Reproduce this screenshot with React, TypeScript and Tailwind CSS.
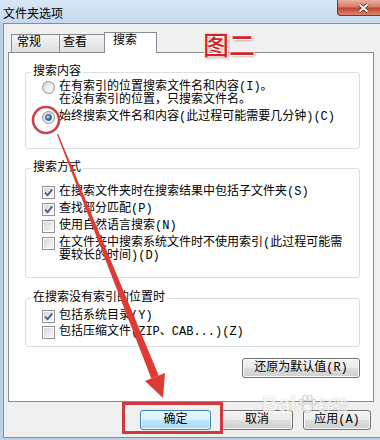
import type { ReactNode } from 'react';

function Radio({ on }: { on?: boolean }) {
  return (
    <span className="flex h-[13px] w-[13px] shrink-0 items-center justify-center rounded-full border border-[#8f9297] bg-gradient-to-br from-[#cfd3d8] to-[#fbfbfb]">
      {on ? (
        <span className="h-[7px] w-[7px] rounded-full border border-[#1d4f87] bg-[radial-gradient(circle_at_35%_35%,#bfe2fb,#2b74c0_60%,#18467c)]" />
      ) : (
        <span className="h-[7px] w-[7px] rounded-full bg-gradient-to-br from-[#e2e4e7] to-[#ffffff]" />
      )}
    </span>
  );
}

function Check({ on }: { on?: boolean }) {
  return (
    <span className="flex h-[13px] w-[13px] shrink-0 items-center justify-center border border-[#8f9297] bg-white">
      <span className="flex h-[9px] w-[9px] items-center justify-center bg-gradient-to-br from-[#d3d7dc] to-[#f8f8f8]">
        {on && (
          <svg width="9" height="9" viewBox="0 0 9 9" className="overflow-visible">
            <path d="M1 4.6 3.6 7.2 8.2 1.4" fill="none" stroke="#46577c" strokeWidth="1.7" />
          </svg>
        )}
      </span>
    </span>
  );
}

function Row({ children, box }: { children: ReactNode; box: ReactNode }) {
  return (
    <div className="flex items-start gap-[4px] pl-[16px] leading-[13px] whitespace-nowrap">
      {box}
      <span>{children}</span>
    </div>
  );
}

function Group({ title, className, children }: { title: string; className: string; children: ReactNode }) {
  return (
    <fieldset className={`rounded-[3px] border border-[#d5dfe5] ${className}`}>
      <legend className="ml-[5px] px-[2px] leading-[14px]">{title}</legend>
      {children}
    </fieldset>
  );
}

function Btn({ children, className }: { children: ReactNode; className: string }) {
  return (
    <button
      className={`flex h-[20px] items-center justify-center rounded-[3px] border leading-[12px] ${className}`}
    >
      {children}
    </button>
  );
}

const plain =
  'border-[#707070] bg-[linear-gradient(#f3f3f3_0%,#ebebeb_48%,#dddddd_52%,#cfcfcf_100%)] shadow-[inset_0_0_0_1px_#fbfbfb]';

export default function App() {
  return (
    <div className="relative h-[440px] w-[380px] overflow-hidden bg-[#bcd0e6] font-['Liberation_Mono','Noto_Sans_CJK_SC',monospace] text-[12px] text-black">
      {/* title bar */}
      <div className="flex h-[23px] justify-between bg-gradient-to-b from-[#d9e7f6] to-[#c5d8ed]">
        <span className="ml-[3px] mt-[5px] font-['Noto_Sans_CJK_SC',sans-serif] leading-[16px]">文件夹选项</span>
        <div className="flex h-[16px] w-[43px] items-center justify-center rounded-bl-[4px] border-b border-l border-[#7d3328] bg-[linear-gradient(#eab0a2,#d77a66_45%,#c3452f_55%,#d9866c)] pl-[8px]">
          <svg width="11" height="10" viewBox="0 0 11 10">
            <path d="M1.5 1.5 9.5 8.5M9.5 1.5 1.5 8.5" stroke="#5a1f16" strokeWidth="3.4" />
            <path d="M1.5 1.5 9.5 8.5M9.5 1.5 1.5 8.5" stroke="#ffffff" strokeWidth="2" />
          </svg>
        </div>
      </div>

      {/* dialog body */}
      <div className="ml-[3px] h-[415px] border-y border-l border-[#7c90a9] bg-[#f0f0f0] pl-[4px] pt-[8px]">
        <div className="ml-[3px] flex items-end">
          <div className="h-[18px] w-[49px] border border-b-0 border-[#898c95] bg-gradient-to-b from-[#f4f4f4] to-[#e0e0e0] pl-[5px] leading-[17px]">常规</div>
          <div className="h-[18px] w-[45px] border border-b-0 border-l-0 border-[#898c95] bg-gradient-to-b from-[#f4f4f4] to-[#e0e0e0] pl-[3px] leading-[17px]">查看</div>
          <div className="relative z-10 -mb-px -ml-px h-[21px] w-[53px] border border-b-0 border-[#898c95] bg-white pl-[8px] leading-[16px]">搜索</div>
        </div>

        <div className="h-[350px] w-[366px] border border-[#898c95] bg-white pl-[16px] pr-[13px] pt-[12px]">
          <Group title="搜索内容" className="pt-[2px] pb-[24px]">
            <Row box={<Radio />}>
              在有索引的位置搜索文件名和内容(I)。
              <br />
              在没有索引的位置，只搜索文件名。
            </Row>
            <div className="mt-[4px]">
              <Row box={<Radio on />}>始终搜索文件名和内容(此过程可能需要几分钟)(C)</Row>
            </div>
          </Group>

          <Group title="搜索方式" className="mt-[12px] flex flex-col gap-[4px] pt-[11px] pb-[14px]">
            <Row box={<Check on />}>在搜索文件夹时在搜索结果中包括子文件夹(S)</Row>
            <Row box={<Check on />}>查找部分匹配(P)</Row>
            <Row box={<Check />}>使用自然语言搜索(N)</Row>
            <Row box={<Check />}>
              在文件夹中搜索系统文件时不使用索引(此过程可能需
              <br />
              要较长的时间)(D)
            </Row>
          </Group>

          <Group title="在搜索没有索引的位置时" className="mt-[13px] flex flex-col gap-[3px] pt-[5px] pb-[7px]">
            <Row box={<Check on />}>包括系统目录(Y)</Row>
            <Row box={<Check />}>包括压缩文件(ZIP、CAB...)(Z)</Row>
          </Group>

          <div className="mt-[11px] flex justify-end">
            <Btn className={`w-[118px] ${plain}`}>还原为默认值(R)</Btn>
          </div>
        </div>

        <div className="mt-[8px] flex justify-end gap-[10px] pr-[9px]">
          <Btn className="w-[71px] border-[#3c7fb1] bg-[linear-gradient(#eaf6fd_0%,#d9f0fc_48%,#bee6fd_52%,#a7d9f5_100%)] shadow-[inset_0_0_0_1px_#f4fbff]">
            确定
          </Btn>
          <Btn className={`w-[72px] ${plain}`}>取消</Btn>
          <Btn className={`w-[68px] ${plain}`}>应用(A)</Btn>
        </div>
      </div>

      {/* watermark */}
      <div className="pointer-events-none absolute left-[262px] top-[392px] flex items-end gap-[1px] font-['Liberation_Sans','Noto_Sans_CJK_SC',sans-serif] text-[#f7f7f7] opacity-70 [text-shadow:0_0_1px_#9a9a9a]">
        <span className="text-[22px] font-bold leading-[24px]">Bai</span>
        <svg width="20" height="20" viewBox="0 0 20 20" className="mb-[2px]">
          <g fill="#f7f7f7" stroke="#a8a8a8" strokeWidth="0.8">
            <ellipse cx="4" cy="8" rx="2.2" ry="3" />
            <ellipse cx="8" cy="4" rx="2.2" ry="3" />
            <ellipse cx="13" cy="4" rx="2.2" ry="3" />
            <ellipse cx="17" cy="8" rx="2.2" ry="3" />
            <ellipse cx="10.5" cy="14" rx="5" ry="4.5" />
          </g>
        </svg>
        <span className="text-[15px] font-bold leading-[20px]">经验</span>
      </div>

      {/* annotation label */}
      <div className="pointer-events-none absolute left-[203px] top-[29px] font-['Noto_Sans_CJK_SC',sans-serif] text-[26px] font-medium leading-[30px] text-[#d5232b] [text-shadow:1px_0_#fff,-1px_0_#fff,0_1px_#fff,0_-1px_#fff,1px_1px_3px_#777]">
        图二
      </div>

      {/* annotation marks */}
      <svg className="pointer-events-none absolute left-0 top-0" width="380" height="440" viewBox="0 0 380 440">
        <circle cx="46" cy="120" r="13" fill="none" stroke="#cc4347" strokeWidth="2.6" />
        <polygon points="58.1,133.7 56.9,134.3 151.3,378.5 158.7,375.5" fill="#df3a33" />
        <polygon points="165,373 145,381 163,398" fill="#df3a33" />
        <rect x="123.5" y="403.5" width="98" height="29" fill="none" stroke="#cf3a40" strokeWidth="3" />
      </svg>
    </div>
  );
}
